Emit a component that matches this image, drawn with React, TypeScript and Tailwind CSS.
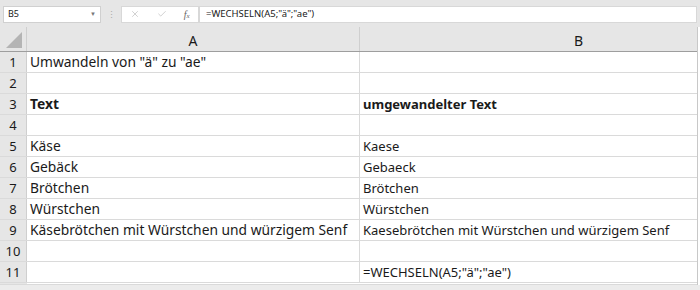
import { X, Check } from "lucide-react";

const rows: { a: string; b: string; bold?: boolean }[] = [
  { a: 'Umwandeln von "ä" zu "ae"', b: "" },
  { a: "", b: "" },
  { a: "Text", b: "umgewandelter Text", bold: true },
  { a: "", b: "" },
  { a: "Käse", b: "Kaese" },
  { a: "Gebäck", b: "Gebaeck" },
  { a: "Brötchen", b: "Brötchen" },
  { a: "Würstchen", b: "Würstchen" },
  { a: "Käsebrötchen mit Würstchen und würzigem Senf", b: "Kaesebrötchen mit Würstchen und würzigem Senf" },
  { a: "", b: "" },
  { a: "", b: '=WECHSELN(A5;"ä";"ae")' },
];

export default function App() {
  return (
    <div className="w-[700px] h-[290px] overflow-hidden bg-white font-['Noto_Sans',sans-serif] text-[#1a1a1a]">
      {/* formula bar */}
      <div className="flex h-[27px] items-center bg-[#e6e6e6] pl-[3px] pr-[3px] pt-[1px]">
        <div className="flex h-[17px] w-[98px] items-center justify-between border border-[#d0d0d0] bg-white pl-[4px] pr-[4px] text-[9px]">
          <span>B5</span>
          <span className="text-[6px] text-[#777]">▼</span>
        </div>
        <div className="flex w-[20px] justify-center text-[9px] leading-none text-[#aaa]">⋮</div>
        <div className="flex h-[17px] w-[78px] items-center justify-around border border-[#d8d8d8] bg-white text-[#b5b5b5]">
          <X size={10} strokeWidth={1.5} />
          <Check size={10} strokeWidth={1.5} />
          <span className="font-['Liberation_Serif',serif] text-[10px] italic text-[#666]">f<span className="text-[7px]">x</span></span>
        </div>
        <div className="flex h-[17px] flex-1 items-center border border-[#d8d8d8] bg-white pl-[6px] text-[9.5px]">
          =WECHSELN(A5;"ä";"ae")
        </div>
      </div>

      {/* sheet */}
      <div className="mr-[2px] border-r border-[#c8c8c8]">
        <div className="flex h-[25px] border-b border-[#9e9e9e] bg-[#e6e6e6]">
          <div className="relative w-[27px] border-r border-[#cfcfcf]">
            <div className="absolute bottom-[3px] right-[4px] h-0 w-0 border-b-[16px] border-l-[16px] border-b-[#b4b4b4] border-l-transparent" />
          </div>
          <div className="flex w-[333px] items-center justify-center border-r border-[#cfcfcf] pt-[2px] text-[14px]">A</div>
          <div className="flex flex-1 items-center justify-center pl-[100px] pt-[2px] text-[14px]">B</div>
        </div>
        {rows.map((r, i) => (
          <div key={i} className="flex h-[21px] border-b border-[#dadada] leading-none">
            <div className="flex w-[27px] items-center justify-center border-r border-[#cfcfcf] bg-[#e6e6e6] text-[13px]">{i + 1}</div>
            <div className={`flex w-[333px] items-center whitespace-nowrap border-r border-[#dadada] pl-[3px] text-[13.8px] ${r.bold ? "font-bold" : ""}`}>{r.a}</div>
            <div className={`flex flex-1 items-center whitespace-nowrap pl-[3px] text-[13px] ${r.bold ? "font-bold" : ""}`}>{r.b}</div>
          </div>
        ))}
        <div className="flex h-[2px] border-b border-[#dadada]">
          <div className="w-[27px] bg-[#e6e6e6]" />
        </div>
      </div>
      <div className="h-[5px] bg-[#ececec]" />
    </div>
  );
}
